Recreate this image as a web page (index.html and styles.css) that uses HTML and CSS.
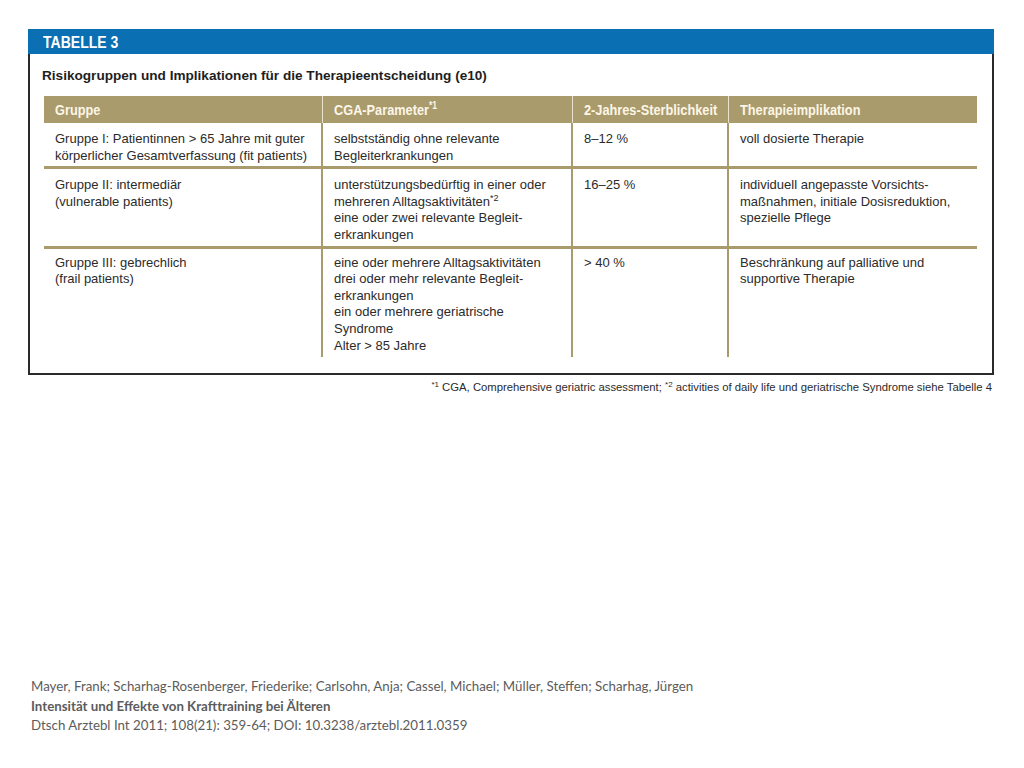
FILE: index.html
```html
<!DOCTYPE html>
<html lang="de">
<head>
<meta charset="utf-8">
<title>Tabelle 3</title>
<link rel="stylesheet" href="styles.css">
</head>
<body>
<main class="page">
  <section class="figure">
    <div class="figure-bar"><span class="narrow">TABELLE 3</span></div>
    <div class="figure-box">
      <h1 class="figure-title">Risikogruppen und Implikationen für die Therapieentscheidung (e10)</h1>
      <table class="risk-table">
        <colgroup>
          <col class="c1"><col class="c2"><col class="c3"><col class="c4">
        </colgroup>
        <thead>
          <tr>
            <th><span class="narrow">Gruppe</span></th>
            <th><span class="narrow">CGA-Parameter<sup>*1</sup></span></th>
            <th><span class="narrow">2-Jahres-Sterblichkeit</span></th>
            <th><span class="narrow">Therapieimplikation</span></th>
          </tr>
        </thead>
        <tbody>
          <tr>
            <td>Gruppe I: Patientinnen &gt; 65 Jahre mit guter<br>körperlicher Gesamtverfassung (fit patients)</td>
            <td>selbstständig ohne relevante<br>Begleiterkrankungen</td>
            <td>8–12 %</td>
            <td>voll dosierte Therapie</td>
          </tr>
          <tr>
            <td>Gruppe II: intermediär<br>(vulnerable patients)</td>
            <td>unterstützungsbedürftig in einer oder<br>mehreren Alltagsaktivitäten<sup>*2</sup><br>eine oder zwei relevante Begleit-<br>erkrankungen</td>
            <td>16–25 %</td>
            <td>individuell angepasste Vorsichts-<br>maßnahmen, initiale Dosisreduktion,<br>spezielle Pflege</td>
          </tr>
          <tr>
            <td>Gruppe III: gebrechlich<br>(frail patients)</td>
            <td>eine oder mehrere Alltagsaktivitäten<br>drei oder mehr relevante Begleit-<br>erkrankungen<br>ein oder mehrere geriatrische<br>Syndrome<br>Alter &gt; 85 Jahre</td>
            <td>&gt; 40 %</td>
            <td>Beschränkung auf palliative und<br>supportive Therapie</td>
          </tr>
        </tbody>
      </table>
    </div>
    <p class="footnote"><sup>*1</sup> CGA, Comprehensive geriatric assessment; <sup>*2</sup> activities of daily life und geriatrische Syndrome siehe Tabelle 4</p>
  </section>
  <footer class="citation">
    <p>Mayer, Frank; Scharhag-Rosenberger, Friederike; Carlsohn, Anja; Cassel, Michael; Müller, Steffen; Scharhag, Jürgen</p>
    <p class="citation-title">Intensität und Effekte von Krafttraining bei Älteren</p>
    <p>Dtsch Arztebl Int 2011; 108(21): 359-64; DOI: 10.3238/arztebl.2011.0359</p>
  </footer>
</main>
</body>
</html>
```

FILE: styles.css
```css
* { box-sizing: border-box; }

html, body {
  margin: 0;
  padding: 0;
  background: #ffffff;
}

body {
  font-family: "Liberation Sans", Arial, sans-serif;
  color: #2b2b2b;
}

.page {
  width: 1024px;
  height: 768px;
  padding: 29px 0 0 28px;
}

.figure {
  width: 966px;
}

.narrow {
  display: inline-block;
  transform: scaleX(0.85);
  transform-origin: left center;
  white-space: nowrap;
}

.figure-bar {
  height: 25px;
  background: #0a6fb3;
  color: #ffffff;
  font-weight: 700;
  font-size: 16.5px;
  line-height: 26px;
  padding-left: 15px;
}

.figure-box {
  border: 2px solid #2a2a2a;
  border-top: none;
  padding: 14px 15px 16px 14px;
}

.figure-title {
  margin: 0 0 12px -2px;
  font-size: 13.6px;
  line-height: 16px;
  font-weight: 700;
  color: #1e1e1e;
}

.risk-table {
  width: 933px;
  table-layout: fixed;
  border-collapse: collapse;
  font-size: 13px;
  line-height: 16.6px;
}

.c1 { width: 278px; }
.c2 { width: 250px; }
.c3 { width: 156px; }
.c4 { width: 249px; }

.risk-table th {
  background: #aa9b6d;
  color: #fcf6e6;
  font-weight: 700;
  font-size: 15px;
  text-align: left;
  height: 27px;
  padding: 1px 0 0 11px;
  line-height: 16px;
  vertical-align: middle;
}

.risk-table th + th {
  border-left: 1px solid #e9e2cc;
}

.risk-table th sup {
  font-size: 10px;
  line-height: 0;
  vertical-align: 6px;
}

.risk-table td {
  vertical-align: top;
  padding: 8px 8px 2px 11px;
  color: #2b2b2b;
}

.risk-table td + td {
  border-left: 2px solid #aa9b6d;
}

.risk-table tbody tr + tr {
  border-top: 3px solid #aa9b6d;
}

.risk-table tbody tr:last-child td {
  padding-top: 6px;
  padding-bottom: 3px;
}

.risk-table td sup {
  font-size: 9px;
  line-height: 0;
  vertical-align: 5px;
}

.footnote {
  margin: 5px 2px 0 0;
  text-align: right;
  font-size: 11.3px;
  line-height: 14px;
  color: #2b2b2b;
}

.footnote sup {
  font-size: 8px;
  line-height: 0;
  vertical-align: 4px;
}

.citation {
  margin-top: 283px;
  padding-left: 3px;
  font-family: Lato, "Open Sans", sans-serif;
  font-size: 13.3px;
  color: #5c5c5c;
}

.citation p {
  margin: 0;
  line-height: 19.5px;
}

.citation-title {
  font-weight: 700;
}
```
